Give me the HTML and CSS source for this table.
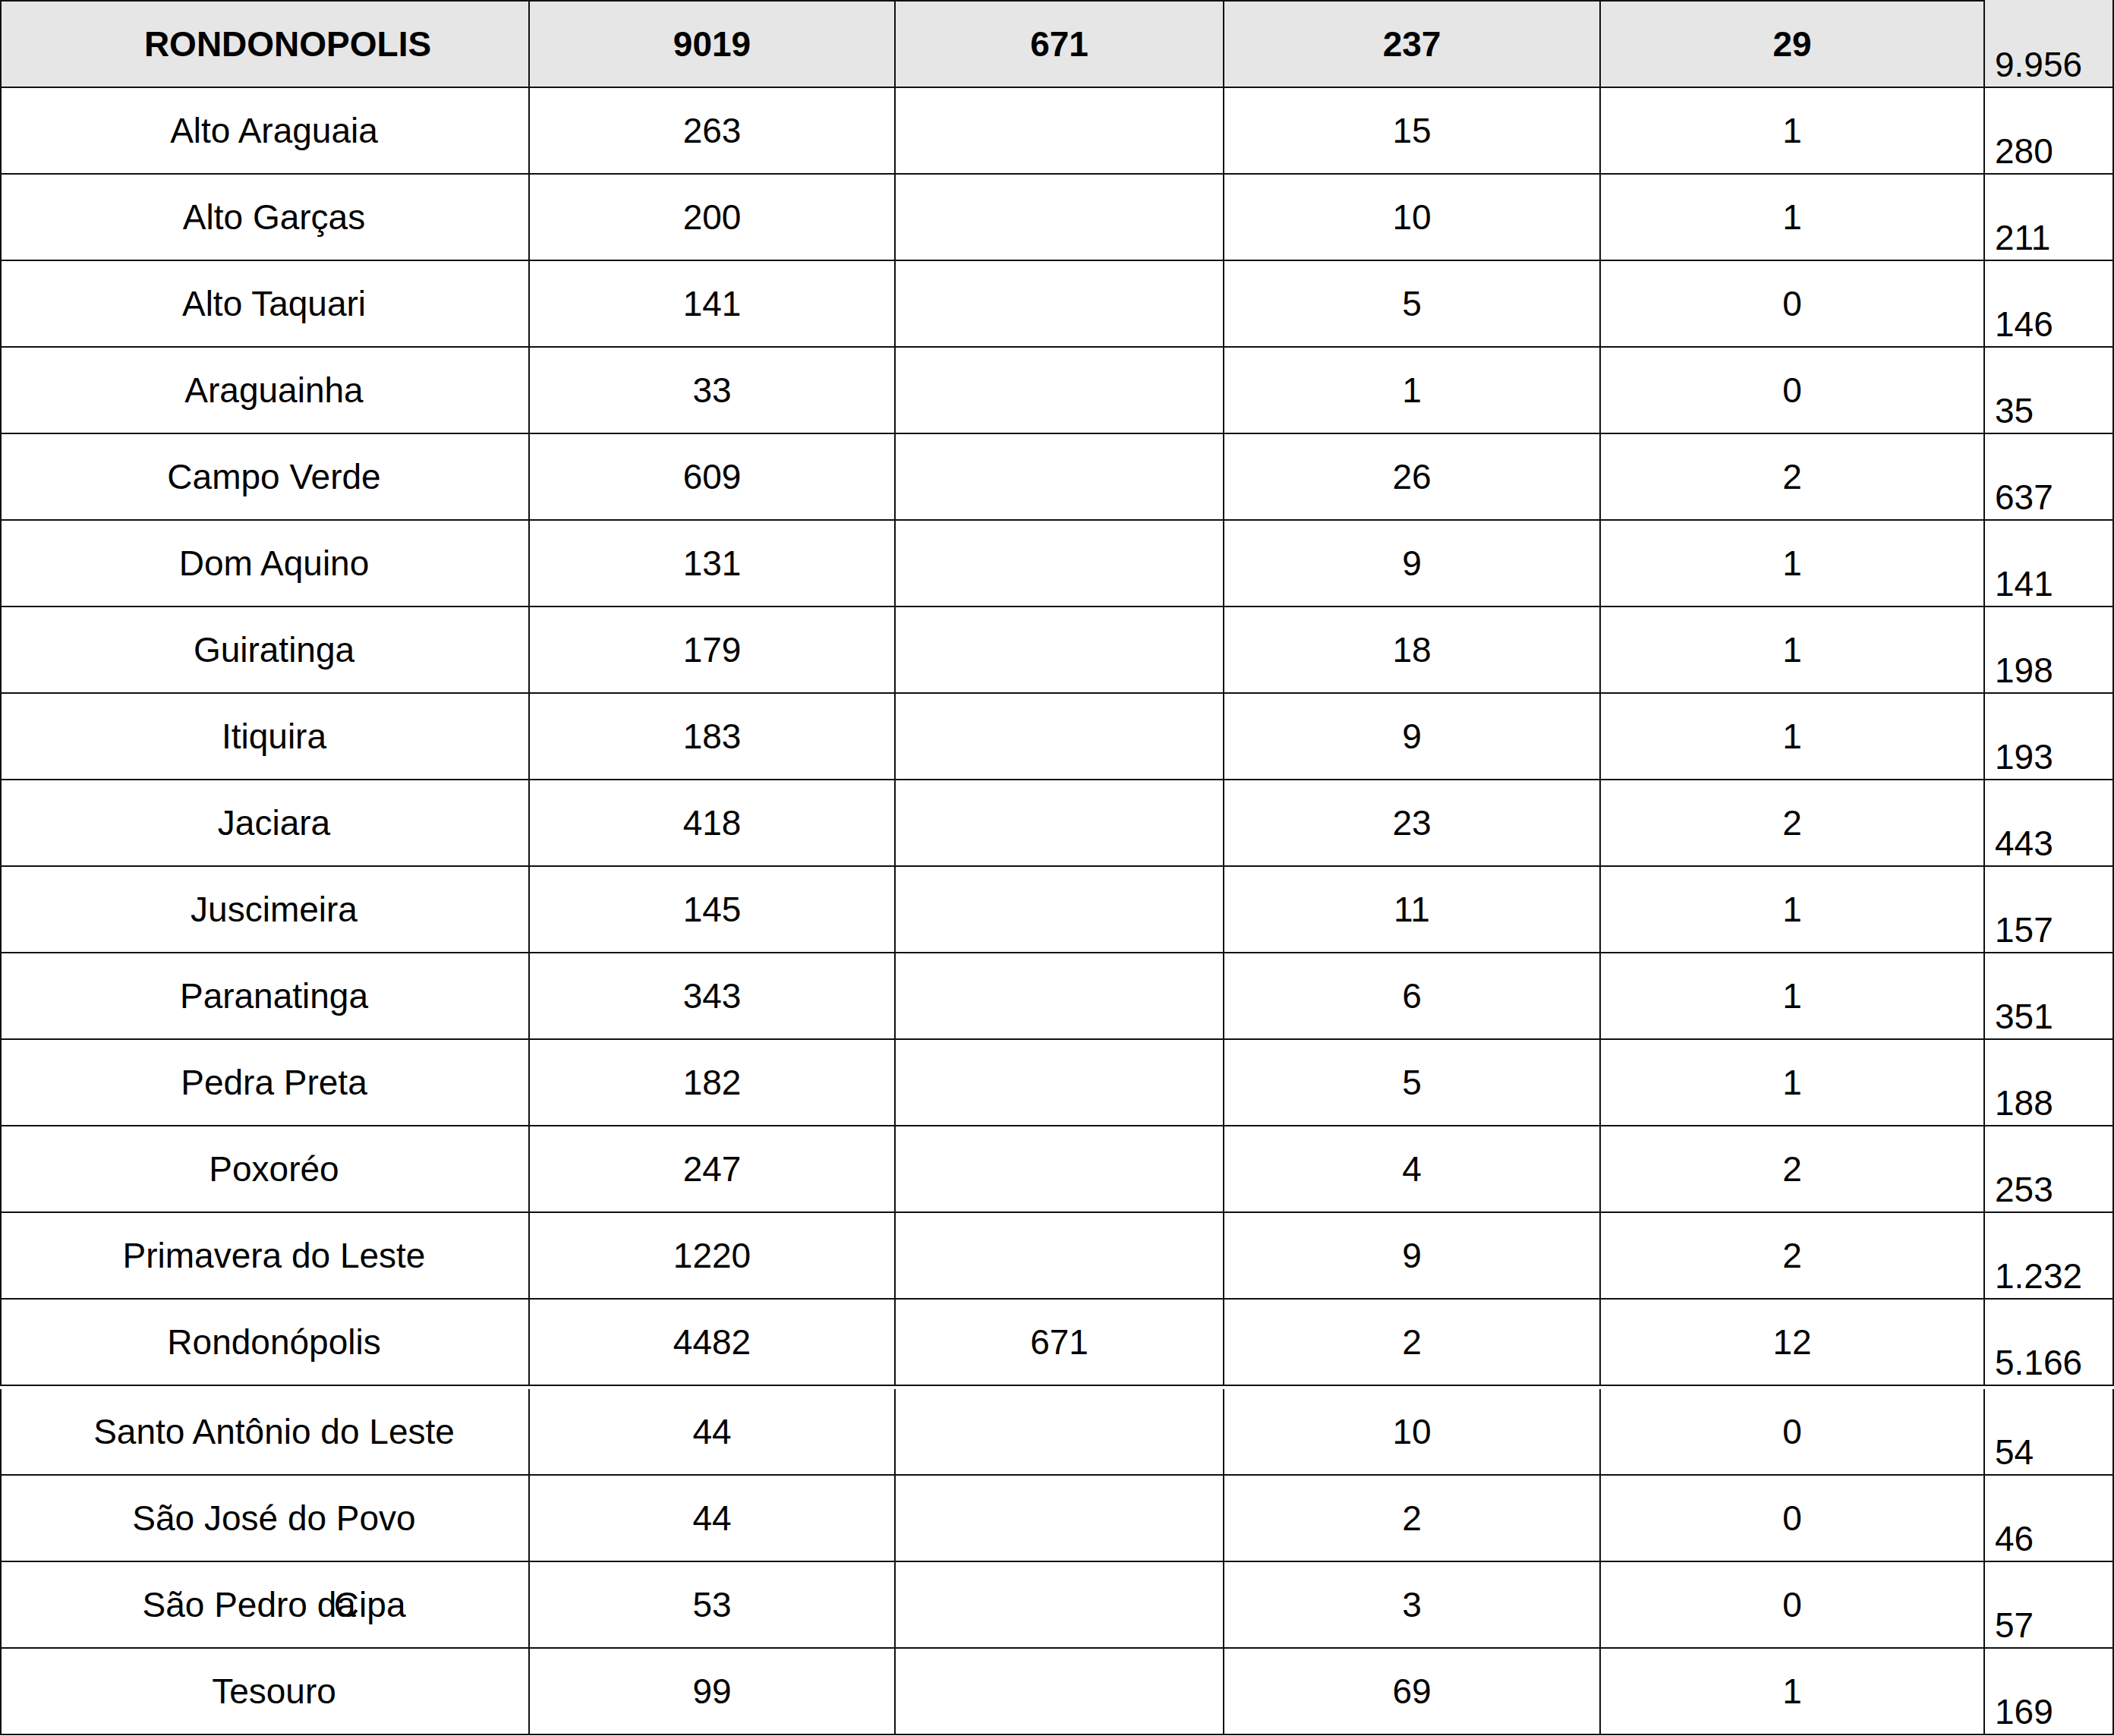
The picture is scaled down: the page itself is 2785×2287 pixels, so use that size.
FILE: index.html
```html
<!DOCTYPE html>
<html lang="pt-BR">
<head>
<meta charset="utf-8">
<title>Rondonópolis</title>
<link rel="stylesheet" href="styles.css">
</head>
<body>
<div class="sheet">
  <div class="block">
    <div class="row head">
      <div class="c name head-name">RONDONOPOLIS</div><div class="c">9019</div><div class="c">671</div><div class="c">237</div><div class="c">29</div><div class="c total">9.956</div>
    </div>
    <div class="row"><div class="c name">Alto Araguaia</div><div class="c">263</div><div class="c"></div><div class="c">15</div><div class="c">1</div><div class="c total">280</div></div>
    <div class="row"><div class="c name">Alto Garças</div><div class="c">200</div><div class="c"></div><div class="c">10</div><div class="c">1</div><div class="c total">211</div></div>
    <div class="row"><div class="c name">Alto Taquari</div><div class="c">141</div><div class="c"></div><div class="c">5</div><div class="c">0</div><div class="c total">146</div></div>
    <div class="row"><div class="c name">Araguainha</div><div class="c">33</div><div class="c"></div><div class="c">1</div><div class="c">0</div><div class="c total">35</div></div>
    <div class="row"><div class="c name">Campo Verde</div><div class="c">609</div><div class="c"></div><div class="c">26</div><div class="c">2</div><div class="c total">637</div></div>
    <div class="row"><div class="c name">Dom Aquino</div><div class="c">131</div><div class="c"></div><div class="c">9</div><div class="c">1</div><div class="c total">141</div></div>
    <div class="row"><div class="c name">Guiratinga</div><div class="c">179</div><div class="c"></div><div class="c">18</div><div class="c">1</div><div class="c total">198</div></div>
    <div class="row"><div class="c name">Itiquira</div><div class="c">183</div><div class="c"></div><div class="c">9</div><div class="c">1</div><div class="c total">193</div></div>
    <div class="row"><div class="c name">Jaciara</div><div class="c">418</div><div class="c"></div><div class="c">23</div><div class="c">2</div><div class="c total">443</div></div>
    <div class="row"><div class="c name">Juscimeira</div><div class="c">145</div><div class="c"></div><div class="c">11</div><div class="c">1</div><div class="c total">157</div></div>
    <div class="row"><div class="c name">Paranatinga</div><div class="c">343</div><div class="c"></div><div class="c">6</div><div class="c">1</div><div class="c total">351</div></div>
    <div class="row"><div class="c name">Pedra Preta</div><div class="c">182</div><div class="c"></div><div class="c">5</div><div class="c">1</div><div class="c total">188</div></div>
    <div class="row"><div class="c name">Poxoréo</div><div class="c">247</div><div class="c"></div><div class="c">4</div><div class="c">2</div><div class="c total">253</div></div>
    <div class="row"><div class="c name">Primavera do Leste</div><div class="c">1220</div><div class="c"></div><div class="c">9</div><div class="c">2</div><div class="c total">1.232</div></div>
    <div class="row"><div class="c name">Rondonópolis</div><div class="c">4482</div><div class="c">671</div><div class="c">2</div><div class="c">12</div><div class="c total">5.166</div></div>
  </div>
  <div class="block block-cont">
    <div class="row"><div class="c name">Santo Antônio do Leste</div><div class="c">44</div><div class="c"></div><div class="c">10</div><div class="c">0</div><div class="c total">54</div></div>
    <div class="row"><div class="c name">São José do Povo</div><div class="c">44</div><div class="c"></div><div class="c">2</div><div class="c">0</div><div class="c total">46</div></div>
    <div class="row"><div class="c name">São Pedro da<span class="overlap">Cipa</span></div><div class="c">53</div><div class="c"></div><div class="c">3</div><div class="c">0</div><div class="c total">57</div></div>
    <div class="row"><div class="c name">Tesouro</div><div class="c">99</div><div class="c"></div><div class="c">69</div><div class="c">1</div><div class="c total">169</div></div>
  </div>
</div>
</body>
</html>
```
FILE: styles.css
```css
html, body {
  margin: 0;
  padding: 0;
  background: #ffffff;
}

body {
  font-family: "Liberation Sans", Arial, sans-serif;
  font-size: 46px;
  color: #000000;
}

.sheet {
  width: 2785px;
}

.block-cont {
  margin-top: 4px;
}

.row {
  display: grid;
  grid-template-columns: 698px 482px 433px 496px 506px 170px;
  height: 114px;
}

.c {
  box-sizing: border-box;
  display: flex;
  align-items: center;
  justify-content: center;
  border-right: 2px solid #111111;
  border-bottom: 2px solid #111111;
  white-space: nowrap;
}

.c.name {
  border-left: 2px solid #111111;
  padding-left: 24px;
}

.head {
  height: 116px;
  background: #e6e6e6;
  font-weight: bold;
}

.head .c {
  border-top: 2px solid #111111;
}

.head .c.head-name {
  padding-left: 60px;
}

.c.total {
  justify-content: flex-start;
  align-items: flex-end;
  padding-left: 13px;
  padding-bottom: 6px;
  line-height: 1;
}

.head .c.total {
  border-top: none;
  font-weight: normal;
}

.overlap {
  margin-left: -29px;
}
```
